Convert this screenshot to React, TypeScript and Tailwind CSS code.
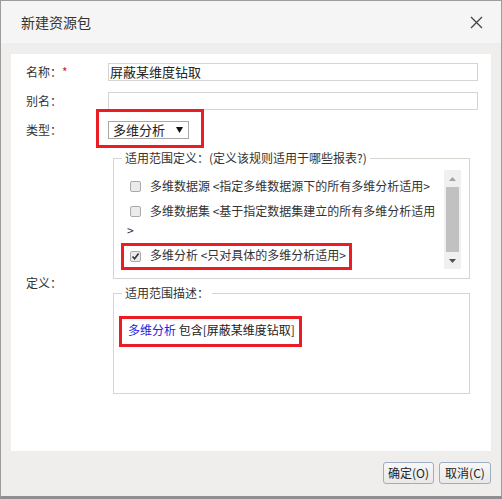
import React from 'react';

const Checkbox: React.FC<{ checked?: boolean }> = ({ checked }) => (
  <span className="inline-flex items-center justify-center w-[11px] h-[11px] border border-[#ababab] bg-[#ebebeb] rounded-[2px] align-[-1px] ml-[3px] mr-[9px]">
    {checked && (
      <svg width="9" height="9" viewBox="0 0 9 9">
        <path d="M1.5 4.5 L3.6 6.8 L7.6 1.6" fill="none" stroke="#333" strokeWidth="1.6" />
      </svg>
    )}
  </span>
);

const App: React.FC = () => {
  return (
    <div className="w-[502px] h-[499px] flex flex-col border-t border-x border-[#9c9c9c] border-b-[3px] border-b-[#8f8f8f] bg-[#efeeec] font-['Noto_Sans_CJK_SC',sans-serif] text-[12px] text-[#333]">
      {/* title bar */}
      <div className="h-[42px] shrink-0 bg-[#f5f5f5] flex items-center justify-between pl-[20px] pr-[18px]">
        <span className="text-[14px] text-[#333]">新建资源包</span>
        <svg width="13" height="13" viewBox="0 0 13 13">
          <path d="M1 1 L12 12 M12 1 L1 12" stroke="#444" strokeWidth="1.3" />
        </svg>
      </div>

      <div className="flex-1 flex flex-col px-[10px] pt-[11px]">
        <div className="relative h-[397px] bg-white flex flex-col">
          {/* 名称 */}
          <div className="flex items-center h-[18px] mt-[9px]">
            <div className="w-[97px] pl-[15px]">
              名称：<span className="text-[#e02020]">*</span>
            </div>
            <div className="w-[370px] h-[18px] border border-[#d4d4d4] flex items-center pl-[1px] text-[13px] text-[#222]">
              屏蔽某维度钻取
            </div>
          </div>

          {/* 别名 */}
          <div className="flex items-center h-[18px] mt-[11px]">
            <div className="w-[97px] pl-[15px]">别名：</div>
            <div className="w-[370px] h-[18px] border border-[#d4d4d4]" />
          </div>

          {/* 类型 */}
          <div className="flex items-center h-[18px] mt-[11px]">
            <div className="w-[97px] pl-[15px]">类型：</div>
            <div className="w-[81px] h-[18px] border border-[#a9a9a9] flex items-center justify-between pl-[4px] pr-[5px] text-[13px] text-[#222]">
              <span>多维分析</span>
              <svg width="7" height="6" viewBox="0 0 7 6">
                <path d="M0 0 L7 0 L3.5 6 Z" fill="#111" />
              </svg>
            </div>
          </div>

          {/* 定义 */}
          <div className="flex mt-[11px]">
            <div className="w-[102px] pl-[15px] pt-[124px] leading-[18px]">定义：</div>
            <div className="w-[357px] flex flex-col">
              <fieldset className="h-[129px] border border-[#d6d5d0] flex flex-col">
                <legend className="ml-[8px] px-[3px] leading-[16px]">适用范围定义：(定义该规则适用于哪些报表?)</legend>
                <div className="flex mt-[4px] mr-[8px] h-[99px]">
                  <div className="flex-1 pl-[13px] pt-[3px]">
                    <div className="py-[3px] leading-[19px]">
                      <Checkbox />
                      多维数据源 &lt;指定多维数据源下的所有多维分析适用&gt;
                    </div>
                    <div className="py-[3px] leading-[19px]">
                      <Checkbox />
                      多维数据集 &lt;基于指定数据集建立的所有多维分析适用
                      <br />
                      &gt;
                    </div>
                    <div className="py-[3px] leading-[19px]">
                      <Checkbox checked />
                      多维分析 &lt;只对具体的多维分析适用&gt;
                    </div>
                  </div>
                  <div className="w-[17px] h-[99px] bg-[#f0f0f0] flex flex-col items-center">
                    <div className="h-[17px] flex items-center justify-center">
                      <svg width="7" height="4" viewBox="0 0 7 4">
                        <path d="M0 4 L7 4 L3.5 0 Z" fill="#a3a3a3" />
                      </svg>
                    </div>
                    <div className="w-[13px] h-[65px] bg-[#c1c1c1]" />
                    <div className="flex-1 flex items-center justify-center">
                      <svg width="7" height="4" viewBox="0 0 7 4">
                        <path d="M0 0 L7 0 L3.5 4 Z" fill="#505050" />
                      </svg>
                    </div>
                  </div>
                </div>
              </fieldset>

              <fieldset className="h-[109px] mt-[6px] border border-[#d6d5d0]">
                <legend className="ml-[8px] px-[3px] leading-[16px]">适用范围描述：</legend>
                <div className="pl-[14px] pt-[20px] leading-[18px] text-[#222]">
                  <span className="text-[#2424e0]">多维分析</span> 包含[屏蔽某维度钻取]
                </div>
              </fieldset>
            </div>
          </div>

          {/* annotation boxes */}
          <div className="absolute left-[85px] top-[55px] w-[108px] h-[39px] border-[3px] border-[#ec1c24]" />
          <div className="absolute left-[110px] top-[189px] w-[231px] h-[27px] border-[3px] border-[#ec1c24]" />
          <div className="absolute left-[108px] top-[262px] w-[183px] h-[31px] border-[3px] border-[#ec1c24]" />
        </div>

        {/* footer */}
        <div className="flex justify-end gap-[5px] pt-[11px]">
          <button className="w-[51px] h-[22px] border border-[#9fadc2] rounded-[3px] bg-gradient-to-b from-[#f7f7f7] to-[#e9e9e9] text-[12px] text-[#222]">
            确定(O)
          </button>
          <button className="w-[52px] h-[22px] border border-[#9fadc2] rounded-[3px] bg-gradient-to-b from-[#f7f7f7] to-[#e9e9e9] text-[12px] text-[#222]">
            取消(C)
          </button>
        </div>
      </div>
    </div>
  );
};

export default App;
